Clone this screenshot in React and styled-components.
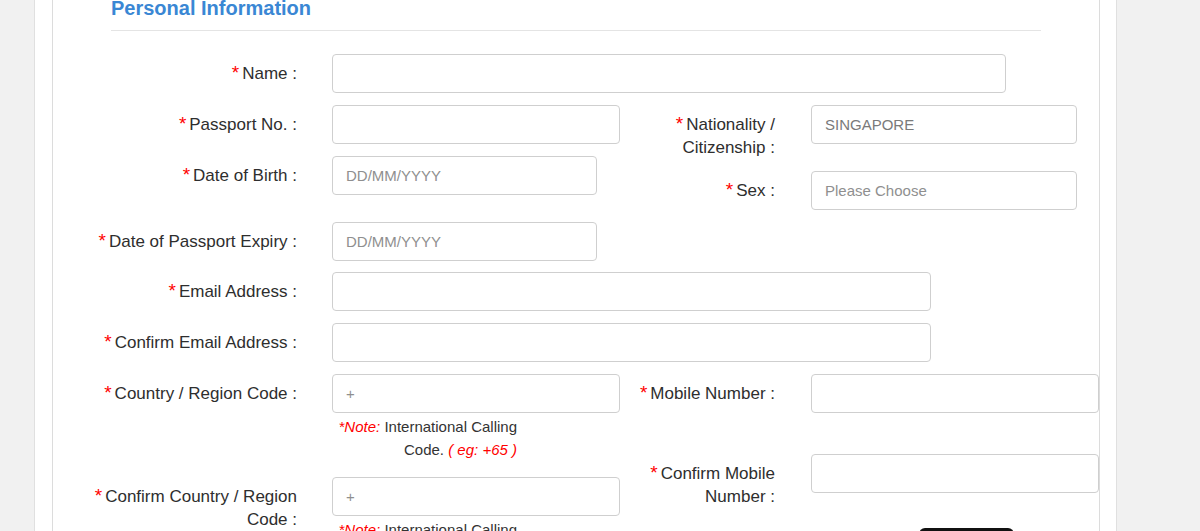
import React from 'react';
import styled, { createGlobalStyle } from 'styled-components';

const GlobalStyle = createGlobalStyle`
  html, body {
    margin: 0;
    overflow: hidden;
  }

  body {
    background: #f1f1f1;
    font-family: "Liberation Sans", Arial, sans-serif;
    color: #333;
  }
`

const Card = styled.div`
  box-sizing: border-box;
  width: 1083px;
  margin: -24px 0 0 34px;
  padding: 0 16px 0 17px;
  background: #fff;
  border-left: 1px solid #e0e0e0;
  border-right: 1px solid #e0e0e0;
`

const Panel = styled.div`
  border-left: 1px solid #dcdcdc;
  border-right: 1px solid #dcdcdc;
  padding-bottom: 60px;
`

const Heading = styled.h2`
  margin: 0;
  padding: 20px 58px 0;
  font-size: 20px;
  line-height: 24px;
  font-weight: bold;
  color: #3a87d4;
`

const Rule = styled.div`
  margin: 10px 58px 0;
  border-top: 1px solid #e4e4e4;
`

const Form = styled.form`
  padding-top: 23px;
`

const TwoCol = styled.div`
  display: grid;
  grid-template-columns: 566px 480px;
  align-items: start;
`

const Field = styled.div`
  display: flex;
  align-items: flex-start;
  margin-bottom: ${props => props.$gap ?? 12}px;
`

const Label = styled.label`
  flex: 0 0 ${props => props.$w}px;
  box-sizing: border-box;
  margin-right: ${props => props.$space}px;
  padding-top: 8px;
  text-align: right;
  font-size: 17px;
  line-height: 23px;
  color: #2e2e2e;
`

const Star = styled.span`
  color: #ff0000;
  font-size: 19px;
  line-height: 0;
  margin-right: 3px;
`

const Control = styled.div`
  display: flex;
  flex-direction: column;
`

const Input = styled.input`
  box-sizing: border-box;
  width: ${props => props.$w}px;
  height: 39px;
  margin: 0;
  padding: 0 13px;
  border: 1px solid #cfcfcf;
  border-radius: 4px;
  background: #fff;
  font-family: "Liberation Sans", Arial, sans-serif;
  font-size: 15px;
  color: #7a7a7a;
  outline: none;

  &::placeholder {
    color: #8f8f8f;
  }
`

const Note = styled.p`
  box-sizing: border-box;
  width: 185px;
  margin: 0;
  padding: 2px 0 4px;
  text-align: right;
  font-size: 15px;
  line-height: 23px;
  color: #333;

  em {
    color: #ff0000;
  }
`

const Button = styled.button`
  width: 95px;
  height: 40px;
  margin-left: 300px;
  border: none;
  border-radius: 6px;
  background: #111;
  color: #fff;
  font-family: "Liberation Sans", Arial, sans-serif;
  font-size: 16px;
`

const Row = ({ label, side = 'left', gap, children }) => (
  <Field $gap={ gap }>
    <Label $w={ side === 'left' ? 244 : 156 } $space={ side === 'left' ? 35 : 36 }>
      <Star>*</Star>{ label }
    </Label>
    <Control>{ children }</Control>
  </Field>
)

const CallingNote = () => (
  <Note>
    <em>*Note:</em> International Calling Code. <em>( eg: +65 )</em>
  </Note>
)

export default function App () {
  return (
    <>
      <GlobalStyle />
      <Card>
        <Panel>
          <Heading>Personal Information</Heading>
          <Rule />
          <Form onSubmit={ e => e.preventDefault() }>
            <Row label="Name :"><Input $w={ 674 } /></Row>

            <TwoCol>
              <div>
                <Row label="Passport No. :"><Input $w={ 288 } /></Row>
                <Row label="Date of Birth :"><Input $w={ 265 } placeholder="DD/MM/YYYY" /></Row>
              </div>
              <div>
                <Row side="right" label="Nationality / Citizenship :">
                  <Input $w={ 266 } defaultValue="SINGAPORE" readOnly />
                </Row>
                <Row side="right" label="Sex :">
                  <Input $w={ 266 } placeholder="Please Choose" readOnly />
                </Row>
              </div>
            </TwoCol>

            <Row label="Date of Passport Expiry :" gap={ 11 }><Input $w={ 265 } placeholder="DD/MM/YYYY" /></Row>
            <Row label="Email Address :"><Input $w={ 599 } /></Row>
            <Row label="Confirm Email Address :"><Input $w={ 599 } /></Row>

            <TwoCol>
              <div>
                <Row label="Country / Region Code :">
                  <Input $w={ 288 } placeholder="+" />
                  <CallingNote />
                </Row>
                <Row label="Confirm Country / Region Code :">
                  <Input $w={ 288 } placeholder="+" />
                  <CallingNote />
                </Row>
              </div>
              <div>
                <Row side="right" label="Mobile Number :" gap={ 41 }><Input $w={ 288 } /></Row>
                <Row side="right" label="Confirm Mobile Number :" gap={ 20 }><Input $w={ 288 } /></Row>
                <Button type="button">Verify</Button>
              </div>
            </TwoCol>
          </Form>
        </Panel>
      </Card>
    </>
  )
}
